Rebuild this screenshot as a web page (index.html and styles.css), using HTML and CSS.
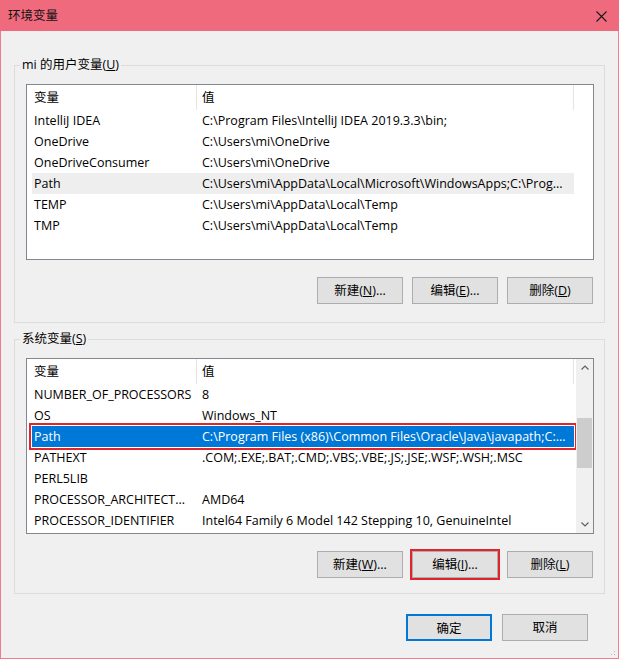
FILE: index.html
```html
<!DOCTYPE html>
<html lang="zh-CN">
<head>
<meta charset="utf-8">
<title>环境变量</title>
<link rel="stylesheet" href="styles.css">
</head>
<body>
<div class="window">
  <div class="titlebar">
    <span class="title">环境变量</span>
    <svg class="close" width="11" height="11" viewBox="0 0 11 11"><path d="M0.5 0.5 L10.5 10.5 M10.5 0.5 L0.5 10.5" stroke="#1a1a1a" stroke-width="1.1" fill="none"/></svg>
  </div>
  <div class="client">
    <fieldset class="group group-user">
      <legend>mi 的用户变量(<u>U</u>)</legend>
      <div class="listview">
        <div class="lv-main">
          <div class="lv-header"><div class="hcol hcol-name">变量</div><div class="hcol hcol-value">值</div></div>
          <div class="lv-row"><span class="cell cell-name">IntelliJ IDEA</span><span class="cell cell-value">C:\Program Files\IntelliJ IDEA 2019.3.3\bin;</span></div>
          <div class="lv-row"><span class="cell cell-name">OneDrive</span><span class="cell cell-value">C:\Users\mi\OneDrive</span></div>
          <div class="lv-row"><span class="cell cell-name">OneDriveConsumer</span><span class="cell cell-value">C:\Users\mi\OneDrive</span></div>
          <div class="lv-row is-hot"><span class="cell cell-name">Path</span><span class="cell cell-value">C:\Users\mi\AppData\Local\Microsoft\WindowsApps;C:\Prog...</span></div>
          <div class="lv-row"><span class="cell cell-name">TEMP</span><span class="cell cell-value">C:\Users\mi\AppData\Local\Temp</span></div>
          <div class="lv-row"><span class="cell cell-name">TMP</span><span class="cell cell-value">C:\Users\mi\AppData\Local\Temp</span></div>
        </div>
      </div>
      <div class="btnrow">
        <button class="btn">新建(<u>N</u>)...</button>
        <button class="btn">编辑(<u>E</u>)...</button>
        <button class="btn">删除(<u>D</u>)</button>
      </div>
    </fieldset>

    <fieldset class="group group-sys">
      <legend>系统变量(<u>S</u>)</legend>
      <div class="listview">
        <div class="lv-main">
          <div class="lv-header"><div class="hcol hcol-name">变量</div><div class="hcol hcol-value">值</div></div>
          <div class="lv-row"><span class="cell cell-name">NUMBER_OF_PROCESSORS</span><span class="cell cell-value">8</span></div>
          <div class="lv-row"><span class="cell cell-name">OS</span><span class="cell cell-value">Windows_NT</span></div>
          <div class="lv-row is-selected"><span class="cell cell-name">Path</span><span class="cell cell-value">C:\Program Files (x86)\Common Files\Oracle\Java\javapath;C:...</span></div>
          <div class="lv-row"><span class="cell cell-name">PATHEXT</span><span class="cell cell-value">.COM;.EXE;.BAT;.CMD;.VBS;.VBE;.JS;.JSE;.WSF;.WSH;.MSC</span></div>
          <div class="lv-row"><span class="cell cell-name">PERL5LIB</span><span class="cell cell-value"></span></div>
          <div class="lv-row"><span class="cell cell-name">PROCESSOR_ARCHITECT...</span><span class="cell cell-value">AMD64</span></div>
          <div class="lv-row"><span class="cell cell-name">PROCESSOR_IDENTIFIER</span><span class="cell cell-value">Intel64 Family 6 Model 142 Stepping 10, GenuineIntel</span></div>
        </div>
        <div class="scrollbar">
          <div class="sb-arrow"><svg width="8" height="5" viewBox="0 0 8 5"><path d="M0.5 4.5 L4 1 L7.5 4.5" stroke="#606060" stroke-width="1.2" fill="none"/></svg></div>
          <div class="sb-track"><div class="sb-thumb"></div></div>
          <div class="sb-arrow"><svg width="8" height="5" viewBox="0 0 8 5"><path d="M0.5 0.5 L4 4 L7.5 0.5" stroke="#606060" stroke-width="1.2" fill="none"/></svg></div>
        </div>
      </div>
      <div class="btnrow">
        <button class="btn">新建(<u>W</u>)...</button>
        <button class="btn is-marked">编辑(<u>I</u>)...</button>
        <button class="btn">删除(<u>L</u>)</button>
      </div>
    </fieldset>

    <div class="footer">
      <button class="btn btn-default">确定</button>
      <button class="btn">取消</button>
    </div>
    <div class="grip"></div>
  </div>
</div>
</body>
</html>
```

FILE: styles.css
```css
* { box-sizing: border-box; }

html, body {
  margin: 0;
  padding: 0;
  background: #f0f0f0;
}

body {
  font-family: "Open Sans", "Noto Sans CJK SC", sans-serif;
  font-size: 12.5px;
  color: #000;
}

.window {
  width: 619px;
  height: 659px;
  display: flex;
  flex-direction: column;
}

.titlebar {
  height: 31px;
  flex: none;
  background: #ef6a7c;
  display: flex;
  align-items: center;
  justify-content: space-between;
  padding: 0 12px 0 8px;
}

.title {
  font-size: 12.5px;
  line-height: 16px;
  color: #111;
}

.close {
  display: block;
  margin-top: 1px;
}

.client {
  flex: 1;
  position: relative;
  background: #f0f0f0;
  border: 1px solid #ee7e8c;
  border-top: 0;
  padding: 26px 13px 0 13px;
  display: flex;
  flex-direction: column;
}

.group {
  margin: 0;
  min-width: 0;
  border: 1px solid #dcdcdc;
  padding: 11px 10px 18px 11px;
}

.group-sys {
  margin-top: 8px;
  padding-bottom: 15px;
}

.group legend {
  padding: 0 2px;
  margin-left: -6px;
  line-height: 16px;
  font-size: 12.5px;
}

u {
  text-decoration: underline;
  text-underline-offset: 1px;
}

.listview {
  height: 176px;
  border: 1px solid #828790;
  background: #fff;
  display: flex;
}

.lv-main {
  flex: 1;
  min-width: 0;
  display: flex;
  flex-direction: column;
}

.lv-header {
  height: 25px;
  display: flex;
  flex: none;
}

.hcol {
  height: 25px;
  line-height: 25px;
  border-right: 1px solid #e5e5e5;
  white-space: nowrap;
}

.hcol-name {
  width: 170px;
  padding-left: 7px;
}

.hcol-value {
  width: 377px;
  padding-left: 5px;
}

.lv-row {
  height: 21px;
  line-height: 21px;
  margin-left: 5px;
  width: 542px;
  display: flex;
  flex: none;
  white-space: nowrap;
}

.cell {
  overflow: hidden;
}

.cell-name {
  width: 164px;
  padding-left: 2px;
}

.cell-value {
  width: 378px;
  padding-left: 6px;
}

.lv-row.is-hot {
  background: #eeeeee;
}

.lv-row.is-selected {
  background: #0078d7;
  color: #fff;
  outline: 2px solid #e0252d;
  outline-offset: 1px;
}

.scrollbar {
  width: 17px;
  flex: none;
  background: #f0f0f0;
  display: flex;
  flex-direction: column;
}

.sb-arrow {
  height: 17px;
  display: flex;
  align-items: center;
  justify-content: center;
}

.sb-arrow svg { display: block; }

.sb-track {
  flex: 1;
  display: flex;
  flex-direction: column;
  align-items: center;
}

.sb-thumb {
  margin-top: 42px;
  width: 15px;
  height: 50px;
  background: #cdcdcd;
}

.btnrow {
  display: flex;
  justify-content: flex-end;
  gap: 9px;
  margin-top: 17px;
  padding-right: 1px;
}

.btn {
  width: 86px;
  height: 27px;
  margin: 0;
  padding: 0;
  background: #e1e1e1;
  border: 1px solid #adadad;
  border-radius: 0;
  font-family: "Open Sans", "Noto Sans CJK SC", sans-serif;
  font-size: 12.5px;
  color: #000;
  line-height: 25px;
  text-align: center;
}

.btn.is-marked {
  outline: 2px solid #e0252d;
  outline-offset: 0;
}

.btn-default {
  border: 2px solid #0078d7;
}

.footer {
  display: flex;
  justify-content: flex-end;
  gap: 10px;
  margin-top: 20px;
  padding-right: 17px;
}

.grip {
  position: absolute;
  right: 1px;
  bottom: 1px;
  width: 10px;
  height: 10px;
  background:
    radial-gradient(circle, #b8b8b8 0.8px, transparent 1px) 0 0 / 3px 3px;
  clip-path: polygon(100% 0, 100% 100%, 0 100%);
}
```
